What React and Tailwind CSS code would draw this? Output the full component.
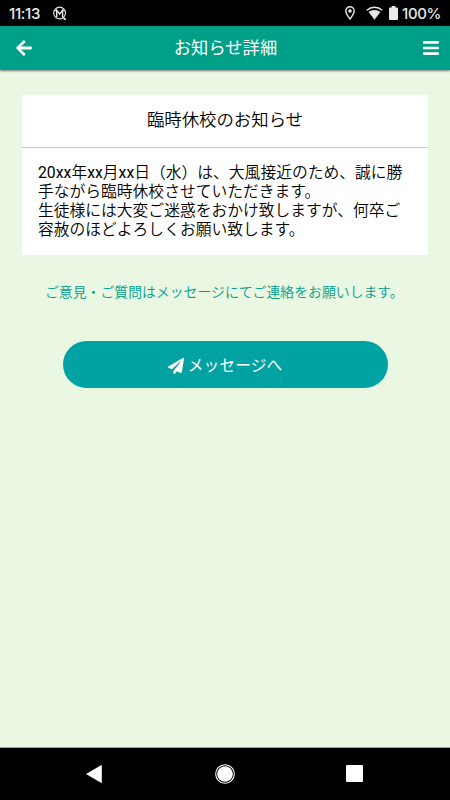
import { FaArrowLeft, FaBars, FaPaperPlane } from 'react-icons/fa'

const FECHA = ['20xx', '年', 'xx', '月', 'xx', '日（水）は、大風接近のため、誠に勝']

const MENSAJE = [
	'手ながら臨時休校させていただきます。',
	'生徒様には大変ご迷惑をおかけ致しますが、何卒ご',
	'容赦のほどよろしくお願い致します。'
]

function StatusBar() {
	return (
		<div className="flex h-[26px] shrink-0 items-center bg-black pl-[9px] pr-[9px] font-['Inter','Noto_Sans_CJK_JP',sans-serif] text-[#e8e8e8]">
			<span className="w-[44px] text-[15px] font-medium leading-none tracking-[-0.3px]">11:13</span>
			<svg className="h-[15px] w-[14px]" viewBox="0 0 14 15" fill="none" stroke="currentColor">
				<circle cx="6.6" cy="7" r="5.9" strokeWidth="1.1" />
				<path d="M3.7 11V4.2L6.6 8l3-3.8V10.5l2.6 3" strokeWidth="1.4" />
				<path d="M1.3 4.5h2.6M9.4 4.5h2.4" strokeWidth="1" />
				<path d="M10.8 13.3h2" strokeWidth="1.4" />
			</svg>
			<div className="ml-auto flex items-center">
				<svg className="mr-[11px] h-[14px] w-[10px]" viewBox="0 0 10 14" fill="none" stroke="currentColor">
					<path d="M5 13C3 10.3.8 7.7.8 5a4.2 4.2 0 0 1 8.4 0C9.2 7.7 7 10.3 5 13Z" strokeWidth="1.4" />
					<circle cx="5" cy="5" r="1.8" fill="currentColor" stroke="none" />
				</svg>
				<svg className="mr-[6px] h-[14px] w-[17px]" viewBox="0 0 17 14">
					<path d="M.8 4.2C5.4.2 11.6.2 16.2 4.2" fill="none" stroke="currentColor" strokeWidth="1.4" />
					<path d="M2.8 6c3.5-2.3 7.9-2.3 11.4 0L8.5 13.5Z" fill="currentColor" stroke="currentColor" strokeWidth="0.4" />
				</svg>
				<svg className="mr-[4px] h-[14px] w-[9px]" viewBox="0 0 9 14" fill="currentColor">
					<path d="M2.6 0h3.8v1.4H8a1 1 0 0 1 1 1V13a1 1 0 0 1-1 1H1a1 1 0 0 1-1-1V2.4a1 1 0 0 1 1-1h1.6Z" />
				</svg>
				<span className="text-[15px] font-medium leading-none tracking-[-0.4px]">100%</span>
			</div>
		</div>
	)
}

function NavBar() {
	return (
		<div className="flex h-[53px] shrink-0 items-center justify-between border-t border-[#9aa095] bg-black pb-[1px] pl-[86px] pr-[87px] text-white">
			<svg className="h-[18px] w-[16px]" viewBox="0 0 16 18" fill="currentColor">
				<path d="M0 9 15 .2q.8-.3.8.5v16.6q0 .8-.8.5Z" />
			</svg>
			<svg className="ml-[2px] h-[20px] w-[20px]" viewBox="0 0 20 20">
				<circle cx="10" cy="10" r="9.3" fill="none" stroke="currentColor" strokeWidth="1.1" />
				<circle cx="10" cy="10" r="7.8" fill="currentColor" />
			</svg>
			<div className="h-[17px] w-[17px] rounded-[1px] bg-white" />
		</div>
	)
}

export default function App() {
	return (
		<div className="flex h-[800px] w-[450px] flex-col overflow-hidden bg-[#eaf7e3] font-['Roboto','Noto_Sans_CJK_JP',sans-serif] text-black">
			<StatusBar />

			{/* Cabecera */}
			<header className="flex h-[44px] shrink-0 items-center justify-between bg-[#00a088] pl-[16px] pr-[11px] text-white shadow-[0_1px_2px_rgba(0,0,0,0.5)]">
				<FaArrowLeft className="h-[18px] w-[16px]" />
				<h1 className="mr-[4px] pt-[2px] text-[17.3px] leading-none">お知らせ詳細</h1>
				<FaBars className="h-[18px] w-[16px]" />
			</header>

			{/* Contenido */}
			<main className="flex grow flex-col px-[22px] pt-[25px]">
				<section className="h-[160px] bg-white">
					<h2 className="h-[53px] border-b border-[#c8c8c8] text-center text-[17.4px] font-[350] leading-[51px]">
						臨時休校のお知らせ
					</h2>
					<div className="px-[16px] pt-[16px] text-[15.77px] font-[350] leading-[18.9px]">
						{/* Las cifras llevan peso normal */}
						<p className="whitespace-nowrap">
							{FECHA.map((parte, index) => (
								<span key={index} className={index % 2 === 0 ? 'font-normal' : ''}>
									{parte}
								</span>
							))}
						</p>
						{MENSAJE.map((linea) => (
							<p key={linea} className="whitespace-nowrap">
								{linea}
							</p>
						))}
					</div>
				</section>

				<p className="mt-[27px] whitespace-nowrap pl-[23px] text-[13.87px] font-[350] leading-[20px] text-[#00a088]">
					ご意見・ご質問はメッセージにてご連絡をお願いします。
				</p>

				<button className="mx-auto mt-[39px] flex h-[47px] w-[325px] items-center justify-center gap-[4px] rounded-full bg-[#00a3a1] pt-[2px] text-[15.8px] text-white">
					<FaPaperPlane className="h-[16px] w-[16px]" />
					<span className="pt-[1px] leading-none">メッセージへ</span>
				</button>
			</main>

			<NavBar />
		</div>
	)
}
